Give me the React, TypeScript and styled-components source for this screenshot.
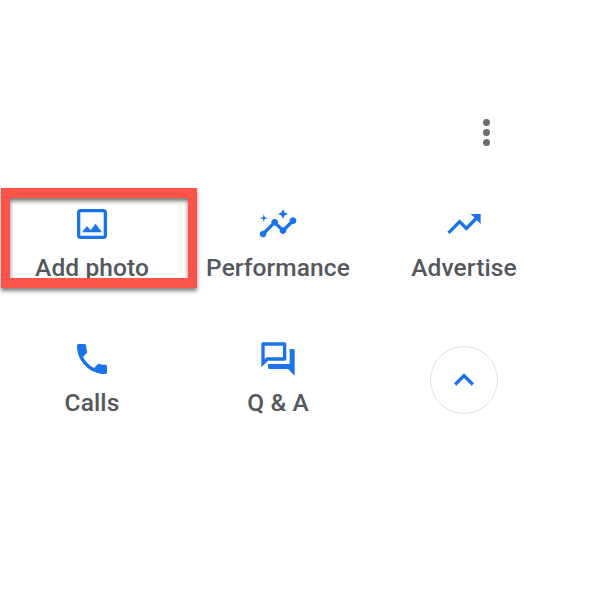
import React from "react";
import styled, { createGlobalStyle } from "styled-components";

const GlobalStyle = createGlobalStyle`
  html, body {
    margin: 0;
    padding: 0;
    background: #fff;
  }
`;

const Page = styled.div`
  width: 600px;
  height: 600px;
  overflow: hidden;
  background: #fff;
  font-family: Roboto, "Liberation Sans", sans-serif;
`;

const Header = styled.div`
  display: flex;
  justify-content: flex-end;
  padding: 119px 110px 0 0;
  height: 204px;
  box-sizing: border-box;
`;

const MoreButton = styled.div`
  display: flex;
  flex-direction: column;
  gap: 3px;
`;

const Dot = styled.span`
  width: 7px;
  height: 7px;
  border-radius: 50%;
  background: #6a6d71;
`;

const Actions = styled.div`
  display: grid;
  grid-template-columns: repeat(3, 184px);
  grid-auto-rows: 135px;
  column-gap: 2px;
`;

const Tile = styled.div`
  position: relative;
  display: flex;
  flex-direction: column;
  align-items: center;
`;

const Icon = styled.svg`
  display: block;
  width: 40px;
  height: 40px;
  fill: #1a73e8;
`;

const Label = styled.div`
  margin-top: 11px;
  font-size: 24.5px;
  line-height: 26px;
  font-weight: 500;
  letter-spacing: 0.1px;
  color: #54575c;
  white-space: nowrap;
`;

const CollapseButton = styled.div`
  display: flex;
  align-items: center;
  justify-content: center;
  width: 68px;
  height: 68px;
  margin-top: 7px;
  box-sizing: border-box;
  border: 1px solid #dfe0e2;
  border-radius: 50%;
`;

const Highlight = styled.div`
  position: absolute;
  left: 1px;
  top: -16px;
  width: 196px;
  height: 100px;
  box-sizing: border-box;
  border: solid #fb5449;
  border-width: 10px 9px;
  box-shadow: 0 3px 4px rgba(0, 0, 0, 0.5), inset 0 3px 4px rgba(0, 0, 0, 0.55);
`;

const actions = [
  {
    label: "Add photo",
    highlighted: true,
    path: "M19 5v14H5V5h14m0-2H5c-1.1 0-2 .9-2 2v14c0 1.1.9 2 2 2h14c1.1 0 2-.9 2-2V5c0-1.1-.9-2-2-2zm-4.86 8.86l-3 3.87L9 13.14 6 17h12l-3.86-5.14z",
  },
  {
    label: "Performance",
    path: "M21 8c-1.45 0-2.26 1.44-1.93 2.51l-3.55 3.56c-.3-.09-.74-.09-1.04 0l-2.55-2.55C12.27 10.45 11.46 9 10 9c-1.45 0-2.27 1.44-1.93 2.52l-4.56 4.55C2.44 15.74 1 16.55 1 18c0 1.1.9 2 2 2 1.45 0 2.26-1.44 1.93-2.51l4.55-4.56c.3.09.74.09 1.04 0l2.55 2.55C12.73 16.55 13.54 18 15 18c1.45 0 2.27-1.44 1.93-2.52l3.56-3.55c1.07.33 2.51-.48 2.51-1.93 0-1.1-.9-2-2-2zM15 9l.94-2.07L18 6l-2.06-.93L15 3l-.92 2.07L12 6l2.08.93zM3.5 11L4 9l2-.5L4 8l-.5-2L3 8l-2 .5L3 9z",
  },
  {
    label: "Advertise",
    path: "M16 6l2.29 2.29-4.88 4.88-4-4L2 16.59 3.41 18l6-6 4 4 6.3-6.29L22 12V6z",
  },
  {
    label: "Calls",
    path: "M6.62 10.79c1.44 2.83 3.76 5.14 6.59 6.59l2.2-2.2c.27-.27.67-.36 1.02-.24 1.12.37 2.33.57 3.57.57.55 0 1 .45 1 1V20c0 .55-.45 1-1 1-9.39 0-17-7.61-17-17 0-.55.45-1 1-1h3.5c.55 0 1 .45 1 1 0 1.25.2 2.45.57 3.57.11.35.03.74-.25 1.02l-2.2 2.2z",
  },
  {
    label: "Q & A",
    path: "M15 4v7H5.17L4 12.17V4h11m1-2H3c-.55 0-1 .45-1 1v14l4-4h10c.55 0 1-.45 1-1V3c0-.55-.45-1-1-1zm5 4h-2v9H6v2c0 .55.45 1 1 1h11l4 4V7c0-.55-.45-1-1-1z",
  },
];

export default function App() {
  return (
    <Page>
      <GlobalStyle />
      <Header>
        <MoreButton>
          <Dot />
          <Dot />
          <Dot />
        </MoreButton>
      </Header>
      <Actions>
        {actions.map((action) => (
          <Tile key={action.label}>
            <Icon viewBox="0 0 24 24">
              <path d={action.path} />
            </Icon>
            <Label>{action.label}</Label>
            {action.highlighted && <Highlight />}
          </Tile>
        ))}
        <Tile>
          <CollapseButton>
            <Icon viewBox="0 0 24 24">
              <path d="M12 8l-6 6 1.41 1.41L12 10.83l4.59 4.58L18 14z" />
            </Icon>
          </CollapseButton>
        </Tile>
      </Actions>
    </Page>
  );
}
